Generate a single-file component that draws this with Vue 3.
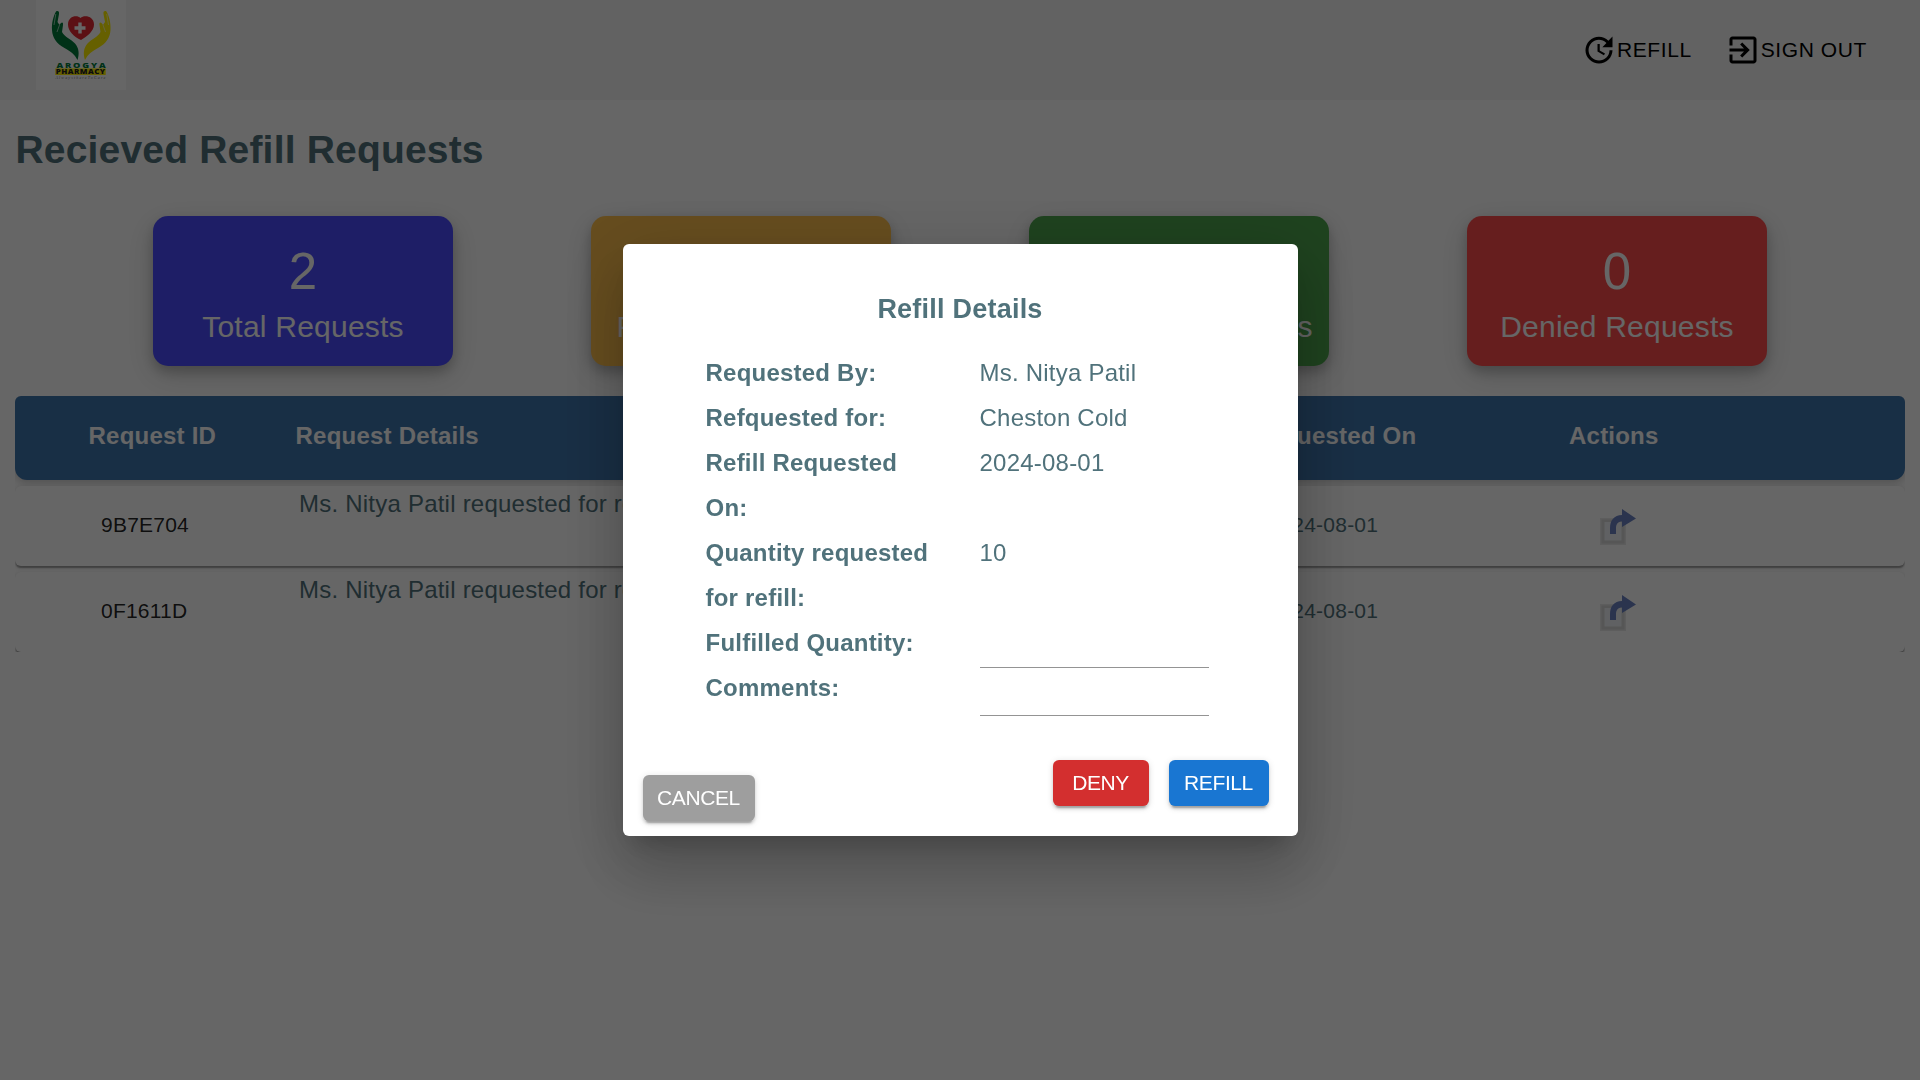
<script setup>
const stats = [
  { value: 2, label: 'Total Requests', tone: 'total' },
  { value: 2, label: 'Pending Requests', tone: 'pending' },
  { value: 0, label: 'Approved Requests', tone: 'approved' },
  { value: 0, label: 'Denied Requests', tone: 'denied' },
]

const requests = [
  { id: '9B7E704', details: 'Ms. Nitya Patil requested for refill', date: '2024-08-01' },
  { id: '0F1611D', details: 'Ms. Nitya Patil requested for refill', date: '2024-08-01' },
]

const details = [
  { label: 'Requested By:', value: 'Ms. Nitya Patil' },
  { label: 'Refquested for:', value: 'Cheston Cold' },
  { label: 'Refill Requested On:', value: '2024-08-01' },
  { label: 'Quantity requested for refill:', value: '10' },
]
</script>

<template>
  <div class="page">
    <header class="navbar">
      <div class="logo">
        <svg width="90" height="90" viewBox="0 0 90 90">
          <path
            fill="#007a3a"
            d="M20 11.500C22 10.500 23.500 11.500 23 14L21.500 22L23.500 25C25 22 27.500 21.500 27 25L26 32C28.500 37 35 39 39 43.500C43 48 43.500 54 41.500 60C38.500 54 34.500 51.500 28.500 48C20.500 43.500 16.500 38 16 30C15.500 23 17.500 16 20 11.500Z"
          />
          <path
            fill="#fff000"
            d="M70.500 11.500C68.500 10.500 67 11.500 67.500 14L69 22L67 25C65.500 22 63 21.500 63.500 25L64.500 32C62 37 55.500 39 51.500 43.500C47.500 48 47 54 49 60C52 54 56 51.500 62 48C70 43.500 74 38 74.500 30C75 23 73 16 70.500 11.500Z"
          />
          <path
            d="M19.800 14L18 25M23.500 25L21 32M70.700 14L72.500 25M67 25L69.500 32"
            stroke="#fff"
            stroke-width=".6"
            fill="none"
          />
          <path
            fill="#e62832"
            d="M44.500 18C48 14.500 58 16 58 24.500C58 31 51 36.500 45 40C38 37 32 31 32 24.500C32 16 41 14.500 44.500 18Z"
          />
          <path d="M44 22.500V33.500M38.500 28H49.500" stroke="#fff" stroke-width="3.400" />
          <text class="logo-name" x="20.500" y="67.500" textLength="51" lengthAdjust="spacingAndGlyphs" fill="#007a3a">AROGYA</text>
          <rect x="19.300" y="68.400" width="50.400" height="6.600" fill="#ffee00" />
          <text class="logo-kind" x="19.700" y="73.900" textLength="49.900" lengthAdjust="spacingAndGlyphs" fill="#222">PHARMACY</text>
          <text class="logo-tag" x="19.500" y="78.500" textLength="50" fill="#777">AlwaysthereToCare</text>
        </svg>
      </div>
      <nav class="links">
        <a class="link">
          <svg width="36" height="36" viewBox="0 0 24 24">
            <path d="M21 10.12h-6.780l2.740-2.820c-2.730-2.700-7.150-2.800-9.880-.1-2.730 2.710-2.730 7.080 0 9.790s7.150 2.710 9.880 0C18.320 15.650 19 14.080 19 12.100h2c0 1.980-.88 4.550-2.640 6.290-3.510 3.480-9.210 3.480-12.720 0-3.500-3.470-3.530-9.110-.02-12.580s9.140-3.470 12.650 0L21 3v7.120zM12.500 8v4.250l3.500 2.080-.72 1.210L11 13V8h1.500z" />
          </svg>REFILL
        </a>
        <a class="link">
          <svg width="36" height="36" viewBox="0 0 24 24">
            <path d="M10.090 15.590 11.500 17l5-5-5-5-1.410 1.410L12.670 11H3v2h9.670l-2.580 2.590zM19 3H5c-1.110 0-2 .9-2 2v4h2V5h14v14H5v-4H3v4c0 1.100.89 2 2 2h14c1.100 0 2-.9 2-2V5c0-1.100-.9-2-2-2z" />
          </svg>SIGN OUT
        </a>
      </nav>
    </header>

    <main class="content">
      <h1 class="title">Recieved Refill Requests</h1>

      <section class="stats">
        <div v-for="s in stats" :key="s.label" class="stat" :class="s.tone">
          <span class="stat-value">{{ s.value }}</span>
          <span class="stat-label">{{ s.label }}</span>
        </div>
      </section>

      <section class="table">
        <div class="grid table-head">
          <span>Request ID</span>
          <span>Request Details</span>
          <span>Requested On</span>
          <span>Actions</span>
        </div>
        <div v-for="r in requests" :key="r.id" class="grid table-row">
          <span class="cell-id">{{ r.id }}</span>
          <span class="cell-details">{{ r.details }}</span>
          <span class="cell-date">{{ r.date }}</span>
          <span class="cell-action">
            <svg width="38" height="38" viewBox="0 0 38 38">
              <rect x="2" y="10" width="26" height="27" fill="#e8e8e8" />
              <rect x="3.500" y="11.500" width="23" height="24" fill="#d6d6d6" />
              <rect x="6.500" y="14" width="17" height="18.500" fill="#f1f3f8" />
              <path fill="#6b82c4" d="M12 26V20C12 12 16 7.500 24 7V1L38 10.500L24 19V13.500C20 13.500 18 16 18 20V26Z" />
            </svg>
          </span>
        </div>
      </section>
    </main>

    <div class="backdrop">
      <div class="dialog" role="dialog">
        <h2 class="dialog-title">Refill Details</h2>
        <div class="fields">
          <template v-for="d in details" :key="d.label">
            <span class="field-label">{{ d.label }}</span>
            <span>{{ d.value }}</span>
          </template>
          <span class="field-label">Fulfilled Quantity:</span>
          <span class="input first"></span>
          <span class="field-label">Comments:</span>
          <span class="input second"></span>
        </div>
        <div class="actions">
          <button class="btn cancel">CANCEL</button>
          <button class="btn deny">DENY</button>
          <button class="btn refill">REFILL</button>
        </div>
      </div>
    </div>
  </div>
</template>

<style>
body {
  overflow: hidden;
}
</style>

<style scoped>
.page {
  height: 100vh;
  background: #fff;
  color: #50727b;
  font-family: Arial, "Liberation Sans", sans-serif;
  font-size: 24px;
  letter-spacing: 0.225px;
}

.navbar {
  display: flex;
  justify-content: space-between;
  align-items: flex-start;
  height: 100px;
  padding: 0 53px 0 36px;
  box-sizing: border-box;
  background: #f5f5f5;
}

.logo {
  width: 90px;
  height: 90px;
  background: #fff;
}

.logo svg {
  display: block;
}

.logo-name {
  font: 800 7.6px "Open Sans", sans-serif;
  letter-spacing: 1.5px;
}

.logo-kind {
  font: 800 6.8px "Open Sans", sans-serif;
  letter-spacing: 0.4px;
}

.logo-tag {
  font: italic 4px "Liberation Serif", serif;
}

.links {
  display: flex;
  gap: 33px;
  height: 100px;
}

.link {
  display: flex;
  align-items: center;
  color: #000;
  font-size: 21px;
  letter-spacing: 0.6px;
}

.content {
  padding: 0 15px;
}

.title {
  margin: 0;
  padding: 20px 0 0 0.5px;
  height: 96px;
  line-height: 59px;
  font-size: 39px;
  letter-spacing: 0.18px;
}

.stats {
  display: flex;
  justify-content: space-evenly;
}

.stat {
  display: flex;
  flex-direction: column;
  align-items: center;
  width: 300px;
  height: 150px;
  padding-top: 24px;
  box-sizing: border-box;
  border-radius: 15px;
  color: #fff;
  box-shadow: 0 6px 12px rgba(0, 0, 0, 0.2), 0 9px 30px rgba(0, 0, 0, 0.15);
}

.total { background: #4d4dff; }
.pending { background: #ffc04d; }
.approved { background: #4da64d; }
.denied { background: #ff4d4d; }

.stat-value {
  font-size: 51px;
  line-height: 63px;
  letter-spacing: 0.375px;
}

.stat-label {
  font-size: 30px;
  line-height: 48px;
}

.table {
  display: flex;
  flex-direction: column;
  gap: 6px;
  margin-top: 30px;
  border-radius: 6px 6px 0 0;
  overflow: hidden;
}

.grid {
  display: grid;
  grid-template-columns: 280px 956px 318px 1fr;
}

.table-head {
  height: 84px;
  line-height: 80px;
  border-radius: 0 0 12px 12px;
  background: #3e75ac;
  color: #fff;
  font-weight: bold;
  box-shadow: 0 3px 9px rgba(0, 0, 0, 0.2);
}

.table-head span:first-child {
  padding-left: 73.5px;
}

.table-head span:nth-child(2) {
  padding-left: 0.5px;
}

.table-row {
  height: 80px;
  border-radius: 6px;
  background: #fff;
  box-shadow: 0 3px 1.5px -1.5px rgba(0, 0, 0, 0.2), 0 1.5px 1.5px rgba(0, 0, 0, 0.14),
    0 1.5px 4.5px rgba(0, 0, 0, 0.12);
}

.cell-id,
.cell-date {
  font-size: 21px;
  line-height: 77px;
}

.cell-id {
  padding-left: 86px;
  color: rgba(0, 0, 0, 0.87);
}

.cell-details {
  padding-left: 4px;
  line-height: 36px;
}

.cell-date {
  padding-left: 17.5px;
}

.cell-action {
  padding: 22px 0 0 29px;
}

.backdrop {
  position: fixed;
  inset: 0;
  display: flex;
  align-items: center;
  justify-content: center;
  background: rgba(0, 0, 0, 0.6);
}

.dialog {
  display: flex;
  flex-direction: column;
  width: 675px;
  height: 592px;
  padding: 0 29px 15px 20px;
  box-sizing: border-box;
  border-radius: 6px;
  background: #fff;
  box-shadow: 0 16.5px 22.5px -10.5px rgba(0, 0, 0, 0.2), 0 36px 57px 4.5px rgba(0, 0, 0, 0.14),
    0 13.5px 69px 12px rgba(0, 0, 0, 0.12);
}

.dialog-title {
  margin: 45px 0 0 9px;
  line-height: 41px;
  font-size: 27px;
  text-align: center;
}

.fields {
  display: grid;
  grid-template-columns: 230px 230px;
  grid-template-rows: 45px 45px 90px 90px 45px 45px;
  column-gap: 44px;
  margin: 20px 0 0 63px;
  line-height: 45px;
}

.field-label {
  font-weight: bold;
}

.input {
  box-sizing: border-box;
  width: 229px;
  border-bottom: 1px solid #949494;
}

.first {
  height: 48px;
}

.second {
  height: 51px;
}

.actions {
  display: flex;
  align-items: flex-start;
  gap: 20px;
  margin-top: auto;
  height: 61px;
}

.btn {
  height: 46px;
  padding: 0;
  border: 0;
  border-radius: 6px;
  color: #fff;
  font-family: inherit;
  font-size: 21px;
  line-height: 46px;
  letter-spacing: -0.4px;
  box-shadow: 0 4.5px 1.5px -3px rgba(0, 0, 0, 0.2), 0 3px 3px rgba(0, 0, 0, 0.14),
    0 1.5px 7.5px rgba(0, 0, 0, 0.12);
}

.cancel {
  width: 112px;
  margin: 15px auto 0 0;
  background: #9e9e9e;
}

.deny {
  width: 96px;
  background: #d32f2f;
}

.refill {
  width: 100px;
  background: #1976d2;
}
</style>
